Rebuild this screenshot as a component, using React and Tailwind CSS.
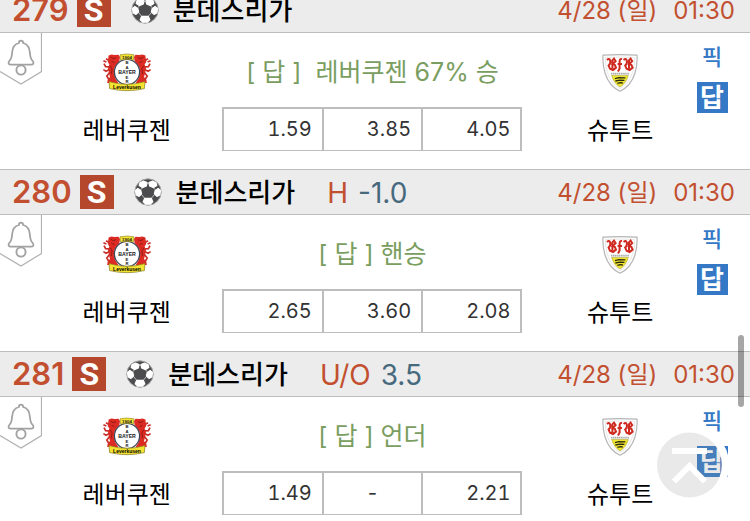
const games = [
  { no: '279', league: '분데스리가', date: '4/28 (일)', time: '01:30', home: '레버쿠젠', away: '슈투트', tip: '레버쿠젠 67% 승', wideTip: true, odds: ['1.59', '3.85', '4.05'] },
  { no: '280', league: '분데스리가', type: 'H', line: '-1.0', date: '4/28 (일)', time: '01:30', home: '레버쿠젠', away: '슈투트', tip: '핸승', odds: ['2.65', '3.60', '2.08'] },
  { no: '281', league: '분데스리가', type: 'U/O', line: '3.5', date: '4/28 (일)', time: '01:30', home: '레버쿠젠', away: '슈투트', tip: '언더', odds: ['1.49', '-', '2.21'] },
];

const SoccerBall = () => (
  <svg viewBox="0 0 28 28" className="w-7 h-7 shrink-0" aria-hidden="true">
    <circle cx="14" cy="14" r="13.2" fill="#4c4c4e" stroke="#a3a3a5" strokeWidth="1" />
    <g fill="#fff" stroke="#fff" strokeWidth="1.2" strokeLinejoin="round">
      <path d="M9.4 3 13 4.6 12.4 8 8.4 9.6 5.2 7.4 6 4.8z" />
      <path d="M18.6 3 15 4.6 15.6 8 19.6 9.6 22.8 7.4 22 4.8z" />
      <path d="M1.4 12.6 3.8 10.4 6.8 12.4 7.6 16 5 18.4 2.2 17z" />
      <path d="M26.6 12.6 24.2 10.4 21.2 12.4 20.4 16 23 18.4 25.8 17z" />
      <path d="M10.6 20.4h6.8l1.4 3.4-2.4 2.4h-4.8l-2.4-2.4z" />
    </g>
    <path d="M12.8 5.4h2.4M7.2 11.6l1-1.8M20.8 11.6l-1-1.8M7.6 16.6l3 3.6M20.4 16.6l-3 3.6" stroke="#d8d8d8" strokeWidth=".8" />
  </svg>
);

const BellTag = () => (
  <svg viewBox="0 0 42 52" className="w-[42px] h-[52px]" fill="none" aria-hidden="true">
    <path d="M41.5 0V38.5L21 51 0 38.5" stroke="#b0b0b0" strokeWidth="1.2" />
    <path
      d="M18.8 10C19 6.8 23 6.8 23.2 10C27.6 11.2 29.4 14.6 29.8 19C30.2 24 30.4 26.2 32.4 27.6C34 28.8 33.8 31.6 31.6 31.6H10.4C8.2 31.6 8 28.8 9.6 27.6C11.6 26.2 11.8 24 12.2 19C12.6 14.6 14.4 11.2 18.8 10Z"
      stroke="#a2a2a2"
      strokeWidth="1.8"
    />
    <circle cx="21" cy="37" r="4.6" fill="#fff" stroke="#a2a2a2" strokeWidth="1.9" />
  </svg>
);

const Lion = () => (
  <g>
    <path d="M7.6 2.6 10.5 1.4 13.5 2 17.5 1.8 19 4 18.4 8 16 11 13.8 14 12.8 20 14.4 25.6 17.4 30H6.2L6.6 27 9 24 8 20.4 7 15 8.4 11.6 6.8 9z" fill="#dd2a22" />
    <path d="M8 13.8 4.6 13.6 3 10.6M8.4 16.6 5 18.2 2.4 16.6M8.6 19.4 5.8 23 8.2 27M5.4 9 2.4 7.8M8 7.6 5 5.8" stroke="#c9302a" strokeWidth="1.7" fill="none" />
    <path d="M9.5 4 12 5.6 15 4.8M10.5 8.4 13.5 9.6M9.2 12.6 11 15.8 10.5 21" stroke="#7d1814" strokeWidth=".8" fill="none" />
  </g>
);

const LeverkusenLogo = () => (
  <svg viewBox="0 0 52 40" className="w-[52px] h-10" aria-hidden="true">
    <Lion />
    <g transform="matrix(-1 0 0 1 52 0)">
      <Lion />
    </g>
    <circle cx="26" cy="19" r="12.6" fill="#fff" stroke="#3d4657" strokeWidth="1.3" />
    <path d="M19 1.8Q26 .2 33 1.8L32.4 7Q26 5.6 19.6 7z" fill="#f4e331" stroke="#8b8225" strokeWidth=".6" />
    <g fontFamily="Liberation Sans" fontWeight="700" fill="#16181c" textAnchor="middle">
      <text x="26" y="5.6" fontSize="4.4">1904</text>
      <text x="26" y="11.2" fontSize="4.2">B</text>
      <text x="26" y="15.6" fontSize="4.2">A</text>
      <text x="26" y="21" fontSize="5.2">BAYER</text>
      <text x="26" y="25.8" fontSize="4.2">E</text>
      <text x="26" y="30" fontSize="4.2">R</text>
    </g>
    <path d="M8 28.6Q26 34 44 28.6L43.4 35.6Q26 39.8 8.6 35.6z" fill="#f4e331" stroke="#857b1c" strokeWidth=".7" />
    <text x="26" y="36" textAnchor="middle" fontFamily="Liberation Sans" fontSize="5" fontWeight="700">Leverkusen</text>
  </svg>
);

const StuttgartLogo = () => (
  <svg viewBox="0 0 36 38" className="w-9 h-[38px]" aria-hidden="true">
    <path d="M1 1.2Q18 .2 35 1.2 35.6 10 33 19 29 32 18 37.2 7 32 3 19 .4 10 1 1.2z" fill="#fff" stroke="#b5b5b5" strokeWidth="1.2" />
    <path d="M3.4 3.4Q18 2.6 32.6 3.4 33 11 30.6 18.5 27 29.6 18 34.6 9 29.6 5.4 18.5 3 11 3.4 3.4z" fill="none" stroke="#dedede" strokeWidth=".7" />
    <g fill="none" stroke="#cf2a20" strokeWidth="2">
      <path d="M5 6Q7.4 3.6 8.2 6.6T6.6 11.6L8 14.8 11 16 14 13.6 12.8 10.8 10.6 10.2 13.6 7.2 12 4.6 10.4 6.4V14.6" />
      <path d="M20 5Q17.6 4.4 17.6 8V14.6L16 17.4M15.6 10H20" />
      <path d="M21.6 6Q24 3.6 24.8 6.6T23.2 11.6L24.6 14.8 27.6 16 30.6 13.6 29.4 10.8 27.2 10.2 30.2 7.2 28.6 4.6 27 6.4V14.6" />
    </g>
    <path d="M9 19.6H27" stroke="#aaa" strokeWidth="1.6" strokeDasharray="1.4 .5" />
    <path d="M9.6 21.4H26.4Q24 29.4 18 33 12 29.4 9.6 21.4z" fill="#efe62f" stroke="#aaa23a" strokeWidth=".6" />
    <path d="M13 24.6 17 23.6 23.4 23.8M13.4 27 18 26.2 22.4 26.4M15.4 29.4 18 28.6 20.8 29" stroke="#2b2912" strokeWidth="1.3" fill="none" />
  </svg>
);

const Team = ({ logo, name }) => (
  <div className="flex flex-col items-center pt-5">
    <div className="h-10 flex items-center">{logo}</div>
    <span className="mt-5 text-2xl leading-9 whitespace-nowrap">{name}</span>
  </div>
);

const GameHeader = ({ game }) => (
  <header className="h-[46px] flex items-center justify-between pl-3 pr-[15px] bg-[#ececec] border-y border-[#bdbdbd]">
    <div className="flex items-center whitespace-nowrap">
      <span className="text-[31px] leading-10 font-semibold text-[#c25030]">{game.no}</span>
      <span className="ml-2 w-[34px] h-[34px] flex items-center justify-center bg-[#b5472d] text-white text-[32px] leading-8 font-bold font-[Roboto,sans-serif]">
        S
      </span>
      <span className="ml-5">
        <SoccerBall />
      </span>
      <h2 className="ml-[14px] pt-px text-[26px] leading-10 font-medium">{game.league}</h2>
      {game.type && (
        <>
          <span className="ml-8 pt-px text-[28px] leading-10 text-[#c25030]">{game.type}</span>
          <span className="ml-[10px] pt-px text-[28px] leading-10 text-[#47697d]">{game.line}</span>
        </>
      )}
    </div>
    <div className="flex gap-4 pt-[2px] text-2xl leading-10 text-[#c25030] whitespace-nowrap">
      <span>{game.date}</span>
      <time>{game.time}</time>
    </div>
  </header>
);

const Game = ({ game }) => (
  <article>
    <GameHeader game={game} />
    <div className="h-[136px] grid grid-cols-[42px_170fr_356fr_108fr_76px]">
      <button type="button" aria-label="알림" className="self-start">
        <BellTag />
      </button>
      <Team logo={<LeverkusenLogo />} name={game.home} />
      <div className="w-[300px] ml-[11px] pt-[21px]">
        <p className="h-9 mb-[17px] flex justify-center text-[25px] leading-9 text-[#7a9e5f] whitespace-pre">
          {game.wideTip ? `[ 답 ]  ${game.tip}` : `[ 답 ] ${game.tip}`}
        </p>
        <table className="w-full table-fixed border-collapse">
          <tbody>
            <tr>
              {game.odds.map((odd, i) => (
                <td
                  key={i}
                  className={`h-[42px] p-0 pr-[10px] border-2 border-b border-[#bdbdbd] text-xl leading-8 tabular-nums text-[#333] ${odd === '-' ? 'pl-[10px] text-center' : 'text-right'}`}
                >
                  {odd}
                </td>
              ))}
            </tr>
          </tbody>
        </table>
      </div>
      <Team logo={<StuttgartLogo />} name={game.away} />
      <div className="flex flex-col items-center pt-2 text-[#3478c6] font-bold">
        <a href="#pick" className="text-[22px] leading-8 font-medium">픽</a>
        <a href="#answer" className="mt-[9px] w-[31px] h-[31px] flex items-center justify-center bg-[#3478c6] text-white text-[26px] leading-[30px]">
          답
        </a>
      </div>
    </div>
  </article>
);

const ScrollTopButton = () => (
  <button type="button" aria-label="맨 위로" className="absolute right-5 bottom-4 w-20 h-20">
    <svg viewBox="0 0 80 80" className="w-20 h-20" fill="none">
      <circle cx="39.5" cy="40" r="36" stroke="#fff" strokeWidth="7.5" />
      <circle cx="39.5" cy="40" r="32.5" fill="#919191" fillOpacity=".2" />
      <path d="M22 26H57M24 56.5 39.5 41 55 56.5" stroke="#fff" strokeWidth="6" />
    </svg>
  </button>
);

export default function App() {
  return (
    <div className="relative h-screen overflow-hidden bg-white text-black font-[Inter,'Noto_Sans_CJK_KR',sans-serif]">
      <main className="-mt-[13px]">
        {games.map((game) => (
          <Game key={game.no} game={game} />
        ))}
      </main>
      <ScrollTopButton />
      <div className="absolute right-[6px] top-[335px] w-[6px] h-[72px] rounded-full bg-black/35" />
    </div>
  );
}
